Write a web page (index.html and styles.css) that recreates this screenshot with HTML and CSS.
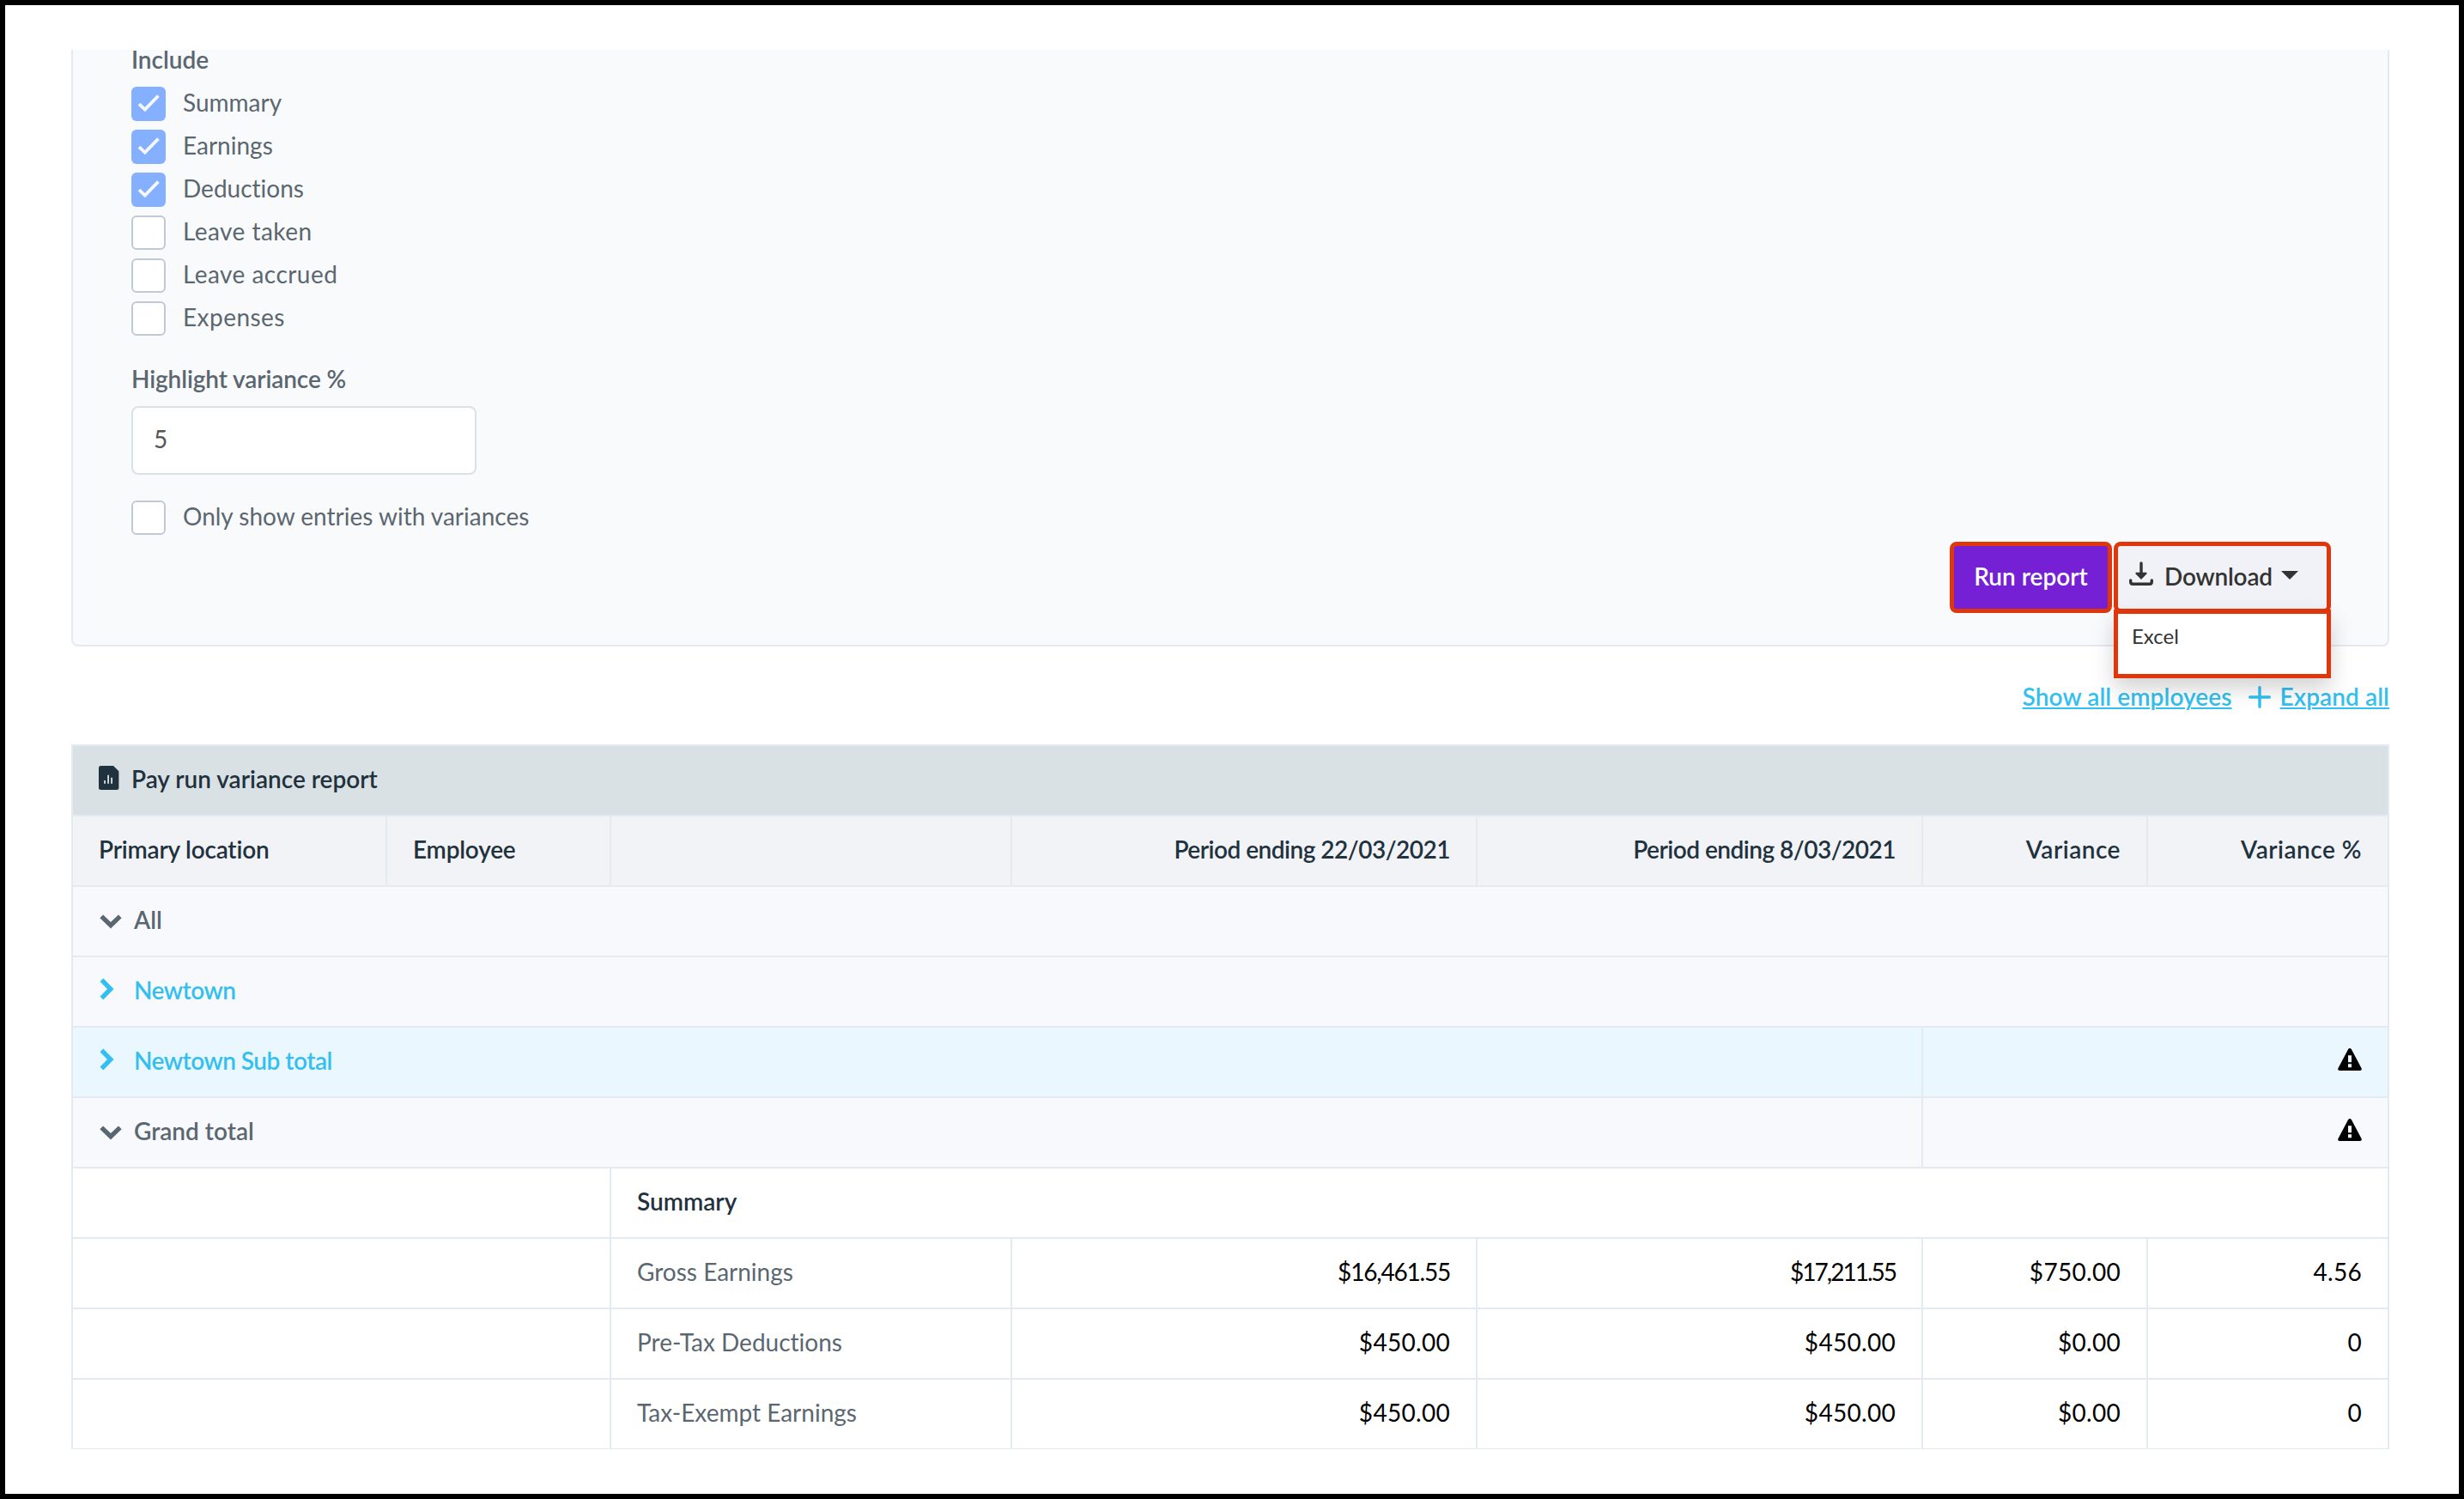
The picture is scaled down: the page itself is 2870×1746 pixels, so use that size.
FILE: index.html
```html
<!DOCTYPE html>
<html>

<head>
  <meta charset="utf-8">
  <title>Pay run variance report</title>
  <link rel="stylesheet" href="styles.css">
</head>

<body>
  <!-- shared icons -->
  <svg class="icon-defs">
    <symbol id="check" viewBox="0 0 40 40">
      <path d="M9 20.2l6.8 6.4L31.4 10.6" fill="none" stroke="#f5f7fa" stroke-width="3.8"/>
    </symbol>
    <symbol id="chevron-down" viewBox="0 0 28 28">
      <path d="M3.2 10.400l10.800 10.300 10.800-10.300" fill="none" stroke="currentColor" stroke-width="5.400"/>
    </symbol>
    <symbol id="chevron-right" viewBox="0 0 28 28">
      <path d="M3.400 2.400l10.400 10.600-10.400 10.600" fill="none" stroke="currentColor" stroke-width="5.400"/>
    </symbol>
    <symbol id="warning" viewBox="0 0 28 26">
      <path fill-rule="evenodd" fill="#000" d="M12.2 1.1Q14-.9 15.8 1.1L27.7 23.4Q28.3 26 26 26H2Q-.3 26 .3 23.4zM12 8.2v8h4v-8zM12 18.2v4h4v-4z"/>
    </symbol>
  </svg>

  <div class="panel">
    <div class="field-label">Include</div>
    <div class="options">
      <label class="option"><span class="box checked"><svg><use href="#check"/></svg></span><span class="option-text">Summary</span></label>
      <label class="option"><span class="box checked"><svg><use href="#check"/></svg></span><span class="option-text">Earnings</span></label>
      <label class="option"><span class="box checked"><svg><use href="#check"/></svg></span><span class="option-text">Deductions</span></label>
      <label class="option leave"><span class="box"></span><span class="option-text">Leave taken</span></label>
      <label class="option leave"><span class="box"></span><span class="option-text">Leave accrued</span></label>
      <label class="option leave"><span class="box"></span><span class="option-text">Expenses</span></label>
    </div>

    <div class="field-label variance-label">Highlight variance %</div>
    <input class="variance-input" type="text" value="5">
    <label class="option only-variances"><span class="box"></span><span class="option-text">Only show entries with variances</span></label>

    <div class="actions">
      <button class="btn btn-run">Run report</button>
      <div class="dropdown">
        <button class="btn btn-download">
          <svg class="icon-download" viewBox="0 0 28 28">
            <path d="M14 2v14M1.7 22v1.8q0 2.5 2.5 2.5h19.6q2.5 0 2.5-2.5V22" fill="none" stroke="currentColor" stroke-width="3.4" stroke-linecap="round"/>
            <path d="M7.6 12.8h12.8v1.8L14 21l-6.4-6.4z" fill="currentColor"/>
          </svg>
          <span>Download</span>
          <span class="caret"></span>
        </button>
        <div class="menu">
          <div class="menu-item">Excel</div>
        </div>
      </div>
    </div>
  </div>

  <div class="links">
    <a class="link">Show all employees</a>
    <svg class="icon-plus" viewBox="0 0 26 26"><path d="M13 1.7v22.6M1.7 13h22.6" stroke="currentColor" stroke-width="3.4" stroke-linecap="round"/></svg>
    <a class="link">Expand all</a>
  </div>

  <table class="report">
    <colgroup>
      <col class="col-location">
      <col class="col-employee">
      <col class="col-item">
      <col class="col-current">
      <col class="col-previous">
      <col class="col-variance">
      <col class="col-percent">
    </colgroup>
    <tr class="title">
      <td colspan="7">
        <div class="cell">
          <svg class="icon-file" viewBox="0 0 24 28">
            <path fill-rule="evenodd" fill="currentColor" d="M2.5 0H17l6.4 6.2v19.3q0 2.5-2.5 2.5H2.5Q0 28 0 25.5v-23Q0 0 2.5 0zM6.200 17v3.800H8V17zM10.200 10.700v10.100H12V10.700zM14.200 13.700v7.100H16v-7.100z"/>
          </svg>
          <span>Pay run variance report</span>
        </div>
      </td>
    </tr>
    <tr class="head">
      <th>Primary location</th>
      <th>Employee</th>
      <th></th>
      <th class="num period">Period ending 22/03/2021</th>
      <th class="num period">Period ending 8/03/2021</th>
      <th class="num">Variance</th>
      <th class="num">Variance %</th>
    </tr>
    <tr class="group">
      <td colspan="7"><div class="cell"><svg class="chevron"><use href="#chevron-down"/></svg><span>All</span></div></td>
    </tr>
    <tr class="group linked">
      <td colspan="7"><div class="cell"><svg class="chevron"><use href="#chevron-right"/></svg><span>Newtown</span></div></td>
    </tr>
    <tr class="group linked subtotal">
      <td colspan="5"><div class="cell"><svg class="chevron"><use href="#chevron-right"/></svg><span>Newtown Sub total</span></div></td>
      <td colspan="2"><div class="cell end"><svg class="warning"><use href="#warning"/></svg></div></td>
    </tr>
    <tr class="group">
      <td colspan="5"><div class="cell"><svg class="chevron"><use href="#chevron-down"/></svg><span>Grand total</span></div></td>
      <td colspan="2"><div class="cell end"><svg class="warning"><use href="#warning"/></svg></div></td>
    </tr>
    <tr>
      <td colspan="2"></td>
      <td class="section" colspan="5">Summary</td>
    </tr>
    <tr>
      <td colspan="2"></td>
      <td>Gross Earnings</td>
      <td class="num tight">$16,461.55</td>
      <td class="num tighter">$17,211.55</td>
      <td class="num">$750.00</td>
      <td class="num">4.56</td>
    </tr>
    <tr>
      <td colspan="2"></td>
      <td>Pre-Tax Deductions</td>
      <td class="num">$450.00</td>
      <td class="num">$450.00</td>
      <td class="num">$0.00</td>
      <td class="num">0</td>
    </tr>
    <tr>
      <td colspan="2"></td>
      <td>Tax-Exempt Earnings</td>
      <td class="num">$450.00</td>
      <td class="num">$450.00</td>
      <td class="num">$0.00</td>
      <td class="num">0</td>
    </tr>
  </table>
</body>

</html>
```
FILE: styles.css
```css
html {
  --text: #5b6770;
  --dark: #1f323e;
  --blue: #33bff0;
  --line: #e3eaf2;
  --marker: #e0360c;
}

* {
  box-sizing: border-box;
}

body {
  margin: 0;
  height: 1746px;
  padding: 52px 81px 0 77px;
  border: 6px solid #000;
  background: #fff;
  color: var(--text);
  font-family: Lato, sans-serif;
  font-size: 28px;
  font-variant-ligatures: none;
  line-height: 36px;
  overflow: hidden;
}

.icon-defs {
  display: none;
}

/* filter panel */

.panel {
  height: 695px;
  padding: 1px 66px 0 68px;
  border: 2px solid var(--line);
  border-top: 0;
  border-radius: 0 0 8px 8px;
  background: #f9fafc;
}

.field-label {
  font-weight: 600;
  line-height: 20px;
}

.options {
  margin-top: 17px;
}

.option {
  display: flex;
  align-items: center;
  height: 50px;
}

.box {
  width: 40px;
  height: 40px;
  border: 2px solid #c1c9d4;
  border-radius: 6px;
  background: #fff;
}

.box.checked {
  border: 0;
  background: #85afff;
}

.box svg {
  display: block;
  width: 40px;
  height: 40px;
}

.option-text {
  margin-left: 20px;
  padding-bottom: 4px;
}

.leave {
  letter-spacing: 0.45px;
}

.variance-label {
  margin-top: 35px;
  letter-spacing: -0.1px;
}

.variance-input {
  display: block;
  width: 402px;
  height: 80px;
  margin-top: 22px;
  padding: 0 24px 4px;
  border: 2px solid #dae2e5;
  border-radius: 8px;
  background: #fff;
  color: #555;
  font: inherit;
}

.only-variances {
  margin-top: 25px;
}

.actions {
  display: flex;
  justify-content: flex-end;
  gap: 2px;
  margin-top: 3px;
}

.btn {
  display: flex;
  align-items: center;
  height: 83px;
  padding: 0 0 3px;
  border: 5px solid var(--marker);
  border-radius: 8px;
  font: inherit;
  font-weight: 600;
}

.btn-run {
  justify-content: center;
  width: 189px;
  background: #7620d6;
  color: #fff;
}

.btn-download {
  width: 253px;
  padding-left: 13px;
  background: #f1f2f7;
  color: #333;
}

.btn-download span {
  letter-spacing: -0.2px;
}

.icon-download {
  width: 28px;
  height: 28px;
  margin: 0 13px 7px 0;
}

.caret {
  margin: 0 0 2px 10px;
  border: 10px solid transparent;
  border-top-color: #333;
  border-bottom: 0;
}

.dropdown {
  position: relative;
}

.menu {
  position: absolute;
  top: 79px;
  left: 0;
  width: 253px;
  height: 80px;
  padding: 11px 16px;
  border: 5px solid var(--marker);
  background: #fff;
  box-shadow: 0 12px 24px rgba(0, 0, 0, 0.175);
}

.menu-item {
  color: #333;
  font-size: 24px;
  line-height: 30px;
}

/* links above the table */

.links {
  display: flex;
  justify-content: flex-end;
  align-items: center;
  margin: 40px 0 38px;
  color: var(--blue);
  font-weight: 600;
}

.link {
  letter-spacing: 0.1px;
  text-decoration: underline;
  text-decoration-thickness: 2px;
  text-underline-offset: 2px;
}

.icon-plus {
  width: 26px;
  height: 26px;
  margin: 1px 11px 0 19px;
}

/* report */

.report {
  width: 2700px;
  table-layout: fixed;
  border-spacing: 0;
  border: 2px solid var(--line);
  border-bottom-width: 0;
}

.col-location { width: 366px; }
.col-employee { width: 261px; }
.col-item { width: 467px; }
.col-current { width: 542px; }
.col-previous { width: 519px; }
.col-variance { width: 262px; }
.col-percent { width: 279px; }

.report td,
.report th {
  height: 82px;
  padding: 0 30px 4px;
  border-right: 2px solid var(--line);
  border-bottom: 2px solid var(--line);
  text-align: left;
  white-space: nowrap;
}

.report td:last-child,
.report th:last-child {
  border-right: 0;
}

.report tr:last-child td {
  height: 81px;
  border-bottom-width: 1px;
}

.cell {
  display: flex;
  align-items: center;
}

.cell.end {
  justify-content: flex-end;
}

.title {
  background: #dae1e4;
  color: var(--dark);
  font-weight: 600;
}

.icon-file {
  width: 24px;
  height: 28px;
  margin: 0 14px 2px 0;
}

.report th {
  background: #f1f3f7;
  color: var(--dark);
  font-weight: 600;
  letter-spacing: -0.2px;
}

.group {
  background: #f8f9fd;
  font-weight: 600;
}

.linked {
  letter-spacing: -0.5px;
  color: var(--blue);
}

.subtotal {
  background: #eaf7ff;
}

.chevron {
  width: 28px;
  height: 28px;
  margin-right: 13px;
}

.warning {
  width: 28px;
  height: 26px;
  margin-bottom: 2px;
}

.report .section {
  color: var(--dark);
  font-weight: 600;
}

.report .num {
  text-align: right;
}

.report td.num {
  color: #000;
  letter-spacing: 0.3px;
}

.report th.num {
  letter-spacing: 0.5px;
}

.report th.period {
  letter-spacing: -0.5px;
}

.report td.tight {
  letter-spacing: -1.2px;
}

.report td.tighter {
  letter-spacing: -2px;
}
```
